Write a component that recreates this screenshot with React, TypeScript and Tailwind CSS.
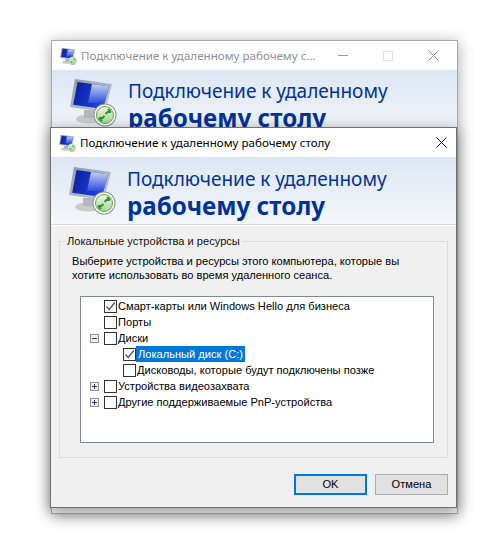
import React from 'react';

const RdpIcon = ({ size }: { size: number }) => (
  <svg width={size} height={size} viewBox="0 0 47 47" className="shrink-0 overflow-visible">
    <defs>
      <linearGradient id="rdpScreen" x1="0" y1="0" x2="1" y2="0.3">
        <stop offset="0" stopColor="#0a1c9c" />
        <stop offset="1" stopColor="#1f46e0" />
      </linearGradient>
      <linearGradient id="rdpGlare" x1="0" y1="0" x2="0" y2="1">
        <stop offset="0" stopColor="#c6d0f5" />
        <stop offset="1" stopColor="#2f4edb" />
      </linearGradient>
      <linearGradient id="rdpFrame" x1="0" y1="0" x2="1" y2="1">
        <stop offset="0" stopColor="#8d9aa8" />
        <stop offset="1" stopColor="#c6ced6" />
      </linearGradient>
      <linearGradient id="rdpBadge" x1="0" y1="0" x2="0" y2="1">
        <stop offset="0" stopColor="#eef8e8" />
        <stop offset="1" stopColor="#a6d693" />
      </linearGradient>
    </defs>
    <ellipse cx="19" cy="42" rx="13" ry="4.500" fill="#c9cccd" />
    <rect x="14" y="33" width="11" height="8" fill="#b4b8ba" />
    <polygon points="5,2 42,7 35,35 0,30" fill="url(#rdpFrame)" />
    <polygon points="7.500,5 39,9.300 33,32 3.200,27.800" fill="url(#rdpScreen)" />
    <polygon points="22,7 39,9.300 34.500,26 18,26" fill="url(#rdpGlare)" />
    <circle cx="35" cy="38" r="11.500" fill="#8f9496" />
    <circle cx="35" cy="38" r="10.500" fill="#ffffff" />
    <circle cx="35" cy="38" r="8.500" fill="url(#rdpBadge)" stroke="#5cab49" />
    <path d="M29 41h3.500l2-2M32 44l-3-3M41 35h-3.500l-2 2M38 32l3 3" stroke="#2f962a" strokeWidth="2" fill="none" />
  </svg>
);

const Banner = ({ back }: { back?: boolean }) => (
  <div
    className={
      back
        ? 'h-[67px] bg-[linear-gradient(#dce6f3,#f4f7fb)] flex items-start pl-[18px] pt-[7px] gap-[11px]'
        : 'h-[67px] bg-[linear-gradient(#dce6f3,#f4f7fb)] flex items-start pl-[18px] pt-[8px] gap-[11px]'
    }
  >
    <RdpIcon size={47} />
    <div className="text-[#003399] text-[19px] leading-[26px] pt-[1px]">
      <div className="whitespace-nowrap">Подключение к удаленному</div>
      <div className="font-bold text-[24.2px] leading-[27px] whitespace-nowrap">рабочему столу</div>
    </div>
  </div>
);

const Checkbox = ({ checked }: { checked?: boolean }) => (
  <span className="w-[13px] h-[13px] border border-[#333333] bg-white shrink-0 flex items-center justify-center">
    {checked && (
      <svg width="11" height="11" viewBox="0 0 11 11">
        <path d="M1.500 5.500 L4.200 8.500 L9.800 1.500" stroke="#555555" strokeWidth="1.300" fill="none" />
      </svg>
    )}
  </span>
);

const Expander = ({ open }: { open?: boolean }) => (
  <span className="w-[9px] h-[9px] border border-[#919191] bg-[#f0f0f0] shrink-0 relative">
    <span className="absolute left-[1px] top-[3px] w-[5px] h-[1px] bg-[#333366]" />
    {!open && <span className="absolute left-[3px] top-[1px] w-[1px] h-[5px] bg-[#333366]" />}
  </span>
);

const TreeRow = ({
  label,
  indent,
  expander,
  open,
  checked,
  selected,
}: {
  label: string;
  indent: number;
  expander?: boolean;
  open?: boolean;
  checked?: boolean;
  selected?: boolean;
}) => (
  <div className="h-[16px] flex items-center relative whitespace-nowrap">
    <span className="w-[9px] ml-[9px] shrink-0 flex">{expander && <Expander open={open} />}</span>
    <span className={indent === 2 ? 'ml-[24px] flex' : 'ml-[5px] flex'}>
      <Checkbox checked={checked} />
    </span>
    <span
      className={
        selected
          ? 'ml-[0px] pl-[2px] pr-[2px] h-[16px] leading-[16px] bg-[#0078d7] text-white'
          : 'ml-[1px] leading-[16px] text-black'
      }
    >
      {label}
    </span>
  </div>
);

export default function App() {
  return (
    <div
      className="relative w-[495px] h-[543px] bg-white overflow-hidden text-[11.6px]"
      style={{ fontFamily: '"Noto Sans", "Open Sans", sans-serif' }}
    >
      {/* back window */}
      <div className="absolute left-[51px] top-[40px] w-[407px] h-[474px] bg-[#f0f0f0] border border-[#a8a8a8] shadow-[0_2px_14px_rgba(0,0,0,0.35)]">
        <div className="h-[29px] bg-white flex items-center pl-[8px]">
          <RdpIcon size={17} />
          <span className="ml-[4px] text-[#8f8f9a] whitespace-nowrap">Подключение к удаленному рабочему с...</span>
          <div className="ml-auto flex items-center">
            <span className="w-[10px] h-[1px] bg-[#9a9a9a] mr-[35px]" />
            <span className="w-[10px] h-[10px] border border-[#e0e0e0] mr-[35px]" />
            <svg width="11" height="11" viewBox="0 0 11 11" className="mr-[18px]">
              <path d="M0.500 0.500 L10.500 10.500 M10.500 0.500 L0.500 10.500" stroke="#8a8a8a" fill="none" />
            </svg>
          </div>
        </div>
        <Banner back />
      </div>

      {/* front window */}
      <div className="absolute left-[50px] top-[127px] w-[407px] h-[381px] bg-[#f0f0f0] border border-[#707070] shadow-[0_3px_14px_rgba(0,0,0,0.4)] flex flex-col">
        <div className="h-[29px] bg-white flex items-center pl-[8px] shrink-0">
          <RdpIcon size={17} />
          <span className="ml-[4px] text-black whitespace-nowrap">Подключение к удаленному рабочему столу</span>
          <svg width="11" height="11" viewBox="0 0 11 11" className="ml-auto mr-[9px]">
            <path d="M0.500 0.500 L10.500 10.500 M10.500 0.500 L0.500 10.500" stroke="#111111" fill="none" />
          </svg>
        </div>
        <Banner />
        <div className="h-[2px] bg-[#d9d9d9] border-b border-white shrink-0" />

        <div
          className="relative mx-[8px] mt-[15px] h-[217px] border border-[#dcdcdc] px-[12px] pt-[12px] text-[11.1px]"
          style={{ fontFamily: '"Liberation Sans", Arial, sans-serif' }}
        >
          <span className="absolute left-[5px] -top-[9px] bg-[#f0f0f0] px-[2px] leading-[16px] text-[#111111] whitespace-nowrap">
            Локальные устройства и ресурсы
          </span>
          <p className="leading-[14px] text-black whitespace-nowrap">
            Выберите устройства и ресурсы этого компьютера, которые вы
            <br />
            хотите использовать во время удаленного сеанса.
          </p>
          <div className="mt-[14px] ml-[8px] w-[354px] h-[147px] bg-white border border-[#828790] pt-[1px]">
            <TreeRow label="Смарт-карты или Windows Hello для бизнеса" indent={1} checked />
            <TreeRow label="Порты" indent={1} />
            <TreeRow label="Диски" indent={1} expander open />
            <TreeRow label="Локальный диск (C:)" indent={2} checked selected />
            <TreeRow label="Дисководы, которые будут подключены позже" indent={2} />
            <TreeRow label="Устройства видеозахвата" indent={1} expander />
            <TreeRow label="Другие поддерживаемые PnP-устройства" indent={1} expander />
          </div>
        </div>

        <div
          className="flex justify-end gap-[8px] mr-[8px] mt-[16px] text-[11.1px]"
          style={{ fontFamily: '"Liberation Sans", Arial, sans-serif' }}
        >
          <button className="w-[73px] h-[21px] bg-[#e1e1e1] border-2 border-[#0078d7] text-black leading-none">OK</button>
          <button className="w-[73px] h-[21px] bg-[#e1e1e1] border border-[#adadad] text-black leading-none">Отмена</button>
        </div>
      </div>
    </div>
  );
}
